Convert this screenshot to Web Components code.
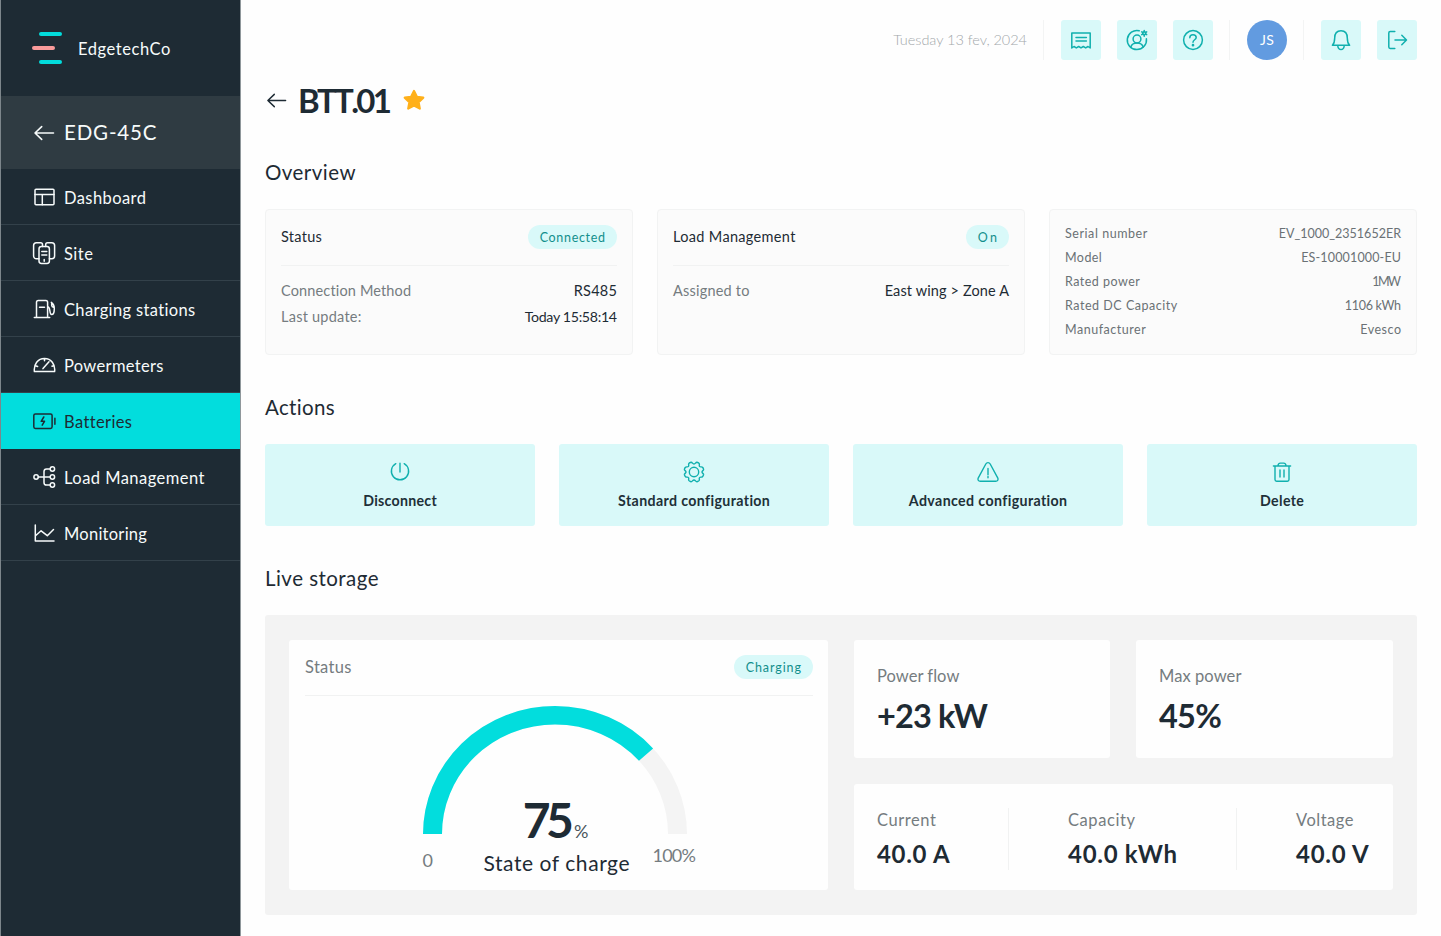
<!DOCTYPE html>
<html lang="en">
<head>
<meta charset="utf-8">
<title>EdgetechCo</title>
<style>
body{margin:0;background:#fefefe;font-family:Lato,"Open Sans",sans-serif;color:#1e2b34}
</style>
</head>
<body>
<app-shell></app-shell>
<script>
const ICONS={
back:'<path d="M3 12h18.500M9.700 5.600 3 12l6.700 6.400"/>',
dashboard:'<rect x="3" y="4.200" width="19" height="15.600" rx="1"/><path d="M3 9.400h19M10.300 9.400v10.400"/>',
site:'<path d="M7 17.700H4.400c-1.600 0-2.800-1-2.800-2.600V4.500c0-1.600 1.200-2.800 2.800-2.800h4.300c1 0 1.800.8 1.800 1.800v2M17.400 17.700h2.400c1.600 0 2.800-1 2.800-2.600V4.500c0-1.600-1.200-2.800-2.800-2.800h-4.300c-1 0-1.800.8-1.800 1.800v2"/><rect x="7" y="5.600" width="10.400" height="16.800" rx="2.400"/><path d="M9.800 10.600h5M9.800 14h5M12.200 18.600v1.600"/>',
station:'<path d="M4.500 20.500V5.300c0-1 .7-1.800 1.800-1.800h7.600c1 0 1.700.8 1.700 1.800v15.200M2.300 20.500h15.400M7.500 10.200h5M15.600 9.600c3.400.3 1.300 8 4 8 2.400 0 2.700-3 2.700-6.200 0-2.900-1.400-5-3-6M19.700 6v2.400c0 1 .8 1.600 2.400 2"/>',
meter:'<path d="M2.400 18.600C1.500 11 6 5.500 12.500 5.500s11 5.500 10.100 13.100zM11 15.600 17 8.800M12.500 5.500v2.200M3.600 12.700l2 .8M21.300 12.700l-1.300.6"/>',
battery:'<rect x="1.800" y="4.900" width="18.300" height="14.500" rx="1.600"/><path d="M22.900 9.300v6M11.800 8 9.200 12.300h3.300L10.200 16.200"/>',
load:'<circle cx="4.100" cy="12" r="2.200"/><circle cx="20.400" cy="4" r="2.200"/><circle cx="20.400" cy="12" r="2.200"/><circle cx="20.400" cy="20" r="2.200"/><path d="M6.300 12h11.900M18.200 4h-3.600c-1.700 0-2.600.9-2.600 2.600v10.800c0 1.700.9 2.600 2.600 2.600h3.600"/>',
chart:'<path d="M3.300 4v16H22M3.500 14.800 9.100 9.800l6.200 4.900 6.200-6.200"/>',
receipt:'<path d="M2.800 20V4.900h18.400V20l-2.200-1.500-2.300 1.400-2.400-1.400L12 19.900l-2.300-1.400-2.400 1.400L5 18.500zM7 9.500h10.400M7 13h10.400"/>',
account:'<path d="M14.200 2.700a9.600 9.600 0 1 0 7.200 8.100"/><circle cx="12" cy="11" r="3.900"/><path d="M5.800 19c.8-2.600 3-4 6.200-4s5.400 1.400 6.200 4"/><circle cx="19.200" cy="5.300" r="1.500"/><path d="M19.200 2.400v1.400M19.200 6.800v1.400M16.700 3.900l1.200.7M20.500 6l1.200.7M16.700 6.700l1.200-.7M20.500 4.600l1.200-.7"/>',
help:'<circle cx="12" cy="12" r="9.400"/><path d="M8.800 9.700c0-2 1.300-3 3.200-3s3.200 1.100 3.200 2.800c0 2.200-3.200 2.300-3.200 4.700"/><circle cx="12" cy="17.200" r=".6" fill="currentColor"/>',
bell:'<path d="M3.400 17.300c1.600-1.600 2.300-3.800 2.300-7.300 0-4.300 2.300-7.300 6.300-7.300s6.300 3 6.300 7.300c0 3.500.7 5.700 2.300 7.300zM8.700 17.500c.3 2.700 1.500 4 3.300 4s3-1.300 3.300-4"/>',
logout:'<path d="M9.800 3.600H5.200c-1 0-1.400.5-1.400 1.400v14c0 .9.400 1.400 1.400 1.400h4.600M10 12h11.300M16.800 7.300l4.700 4.700-4.700 4.700"/>',
power:'<path d="M7.800 3.700a8.600 8.600 0 1 0 8.400 0M12 3.200v8.900"/>',
gear:'<path d="M12 4c1.500 0 1.600-1.900 3-1.700 1.200.3 2 .7 2.300 1.400.4 1-.5 1.900.2 2.700.7.900 2 .1 2.800.7.700.5 1.100 1.200 1.300 2.200.2 1.200-1.600 1.400-1.600 2.700s1.800 1.500 1.600 2.700c-.2 1-.6 1.700-1.300 2.200-.8.600-2.100-.2-2.800.7-.7.800.2 1.700-.2 2.700-.3.700-1.100 1.100-2.300 1.400-1.400.2-1.500-1.700-3-1.700s-1.600 1.900-3 1.700c-1.200-.3-2-.7-2.300-1.400-.4-1 .5-1.900-.2-2.700-.7-.9-2-.1-2.800-.7-.7-.5-1.100-1.200-1.300-2.200C2.200 13.500 4 13.300 4 12s-1.800-1.500-1.600-2.700c.2-1 .6-1.700 1.300-2.200.8-.6 2.100.2 2.800-.7.700-.8-.2-1.700.2-2.700C7 3 7.800 2.600 9 2.300 10.400 2.100 10.500 4 12 4z"/><circle cx="12" cy="12" r="4.700"/>',
warn:'<path d="M9.800 4c1-1.900 3.400-1.900 4.400 0l7.500 13.800c.9 1.800 0 3.500-2 3.500H4.300c-2 0-2.900-1.700-2-3.500z"/><path d="M12 8.500v6.200M12 16.500v1.200"/>',
trash:'<path d="M3.400 6h17.200M5 6v13.600c0 1 .6 1.600 1.600 1.600h10.800c1 0 1.600-.6 1.600-1.600V6M8 6c0-2 .8-2.900 2.400-2.900h3.200C15.200 3.100 16 4 16 6M10 10v7M14 10v7"/>',
star:'<path fill="currentColor" stroke-width="2.200" d="M12 2.900l2.900 5.900 6.400.9-4.700 4.500 1.200 6.400L12 17.500l-5.800 3.100 1.200-6.400L2.700 9.700l6.400-.9z"/>'
};

function define(name,html,after){
  const tpl=document.createElement('template');
  customElements.define(name,class extends HTMLElement{
    connectedCallback(){
      if(this.shadowRoot)return;
      tpl.innerHTML=typeof html==='function'?html(this):html;
      this.attachShadow({mode:'open'}).append(tpl.content.cloneNode(true));
      if(after)after(this);
    }
  });
}
const attr=(e,n,d='')=>e.getAttribute(n)??d;

define('app-shell',`<style>
:host{display:grid;grid-template-columns:241px 1fr;height:936px;overflow:hidden}
main{display:flex;flex-direction:column;padding:0 24px}
.overview{display:grid;grid-template-columns:repeat(3,1fr);gap:24px;height:146px}
.actions{display:grid;grid-template-columns:repeat(4,1fr);gap:24px;height:82px}
.title{display:flex;align-items:center;height:40px;gap:10px}
h1{margin:0;font-weight:inherit}
</style>
<side-bar></side-bar>
<main>
 <top-bar></top-bar>
 <div class="title"><app-icon name="back" size="23" stroke="1.500"></app-icon><h1><fit-text size="33" weight="700" w="93" lh="40" style="font-kerning:none">BTT.01</fit-text></h1><app-icon name="star" size="24" style="color:#ffb01a"></app-icon></div>
 <section-title style="margin:37px 0 22px"><fit-text size="20.500" w="90" lh="31">Overview</fit-text></section-title>
 <div class="overview">
  <info-card>
   <card-head><fit-text size="14.500" w="40.500" lh="24">Status</fit-text><pill-badge slot="end"><fit-text size="12.500" w="65" lh="25">Connected</fit-text></pill-badge></card-head>
   <data-row><fit-text size="14.500" w="130" lh="26">Connection Method</fit-text><fit-text slot="end" size="14.500" w="43" lh="26">RS485</fit-text></data-row>
   <data-row><fit-text size="14.500" w="80" lh="26">Last update:</fit-text><fit-text slot="end" size="14.200" w="92" lh="26">Today 15:58:14</fit-text></data-row>
  </info-card>
  <info-card>
   <card-head><fit-text size="14.500" w="122" lh="24">Load Management</fit-text><pill-badge slot="end"><fit-text size="12.500" w="19" lh="25">On</fit-text></pill-badge></card-head>
   <data-row><fit-text size="14.500" w="76" lh="26">Assigned to</fit-text><fit-text slot="end" size="14.500" w="124" lh="26">East wing &gt; Zone A</fit-text></data-row>
  </info-card>
  <info-card style="padding-top:12px">
   <data-row small><fit-text size="12.500" w="82" lh="24">Serial number</fit-text><fit-text slot="end" size="12.500" w="122" lh="24">EV_1000_2351652ER</fit-text></data-row>
   <data-row small><fit-text size="12.500" w="36.500" lh="24">Model</fit-text><fit-text slot="end" size="12.500" w="99.500" lh="24">ES-10001000-EU</fit-text></data-row>
   <data-row small><fit-text size="12.500" w="74.500" lh="24">Rated power</fit-text><fit-text slot="end" size="12.500" w="28.500" lh="24">1MW</fit-text></data-row>
   <data-row small><fit-text size="12.500" w="112" lh="24">Rated DC Capacity</fit-text><fit-text slot="end" size="12.500" w="56" lh="24">1106 kWh</fit-text></data-row>
   <data-row small><fit-text size="12.500" w="80.500" lh="24">Manufacturer</fit-text><fit-text slot="end" size="12.500" w="40.500" lh="24">Evesco</fit-text></data-row>
  </info-card>
 </div>
 <section-title style="margin:37px 0 22px"><fit-text size="20.500" w="69.500" lh="31">Actions</fit-text></section-title>
 <div class="actions">
  <action-tile icon="power"><fit-text size="14.200" weight="700" w="73" lh="20">Disconnect</fit-text></action-tile>
  <action-tile icon="gear"><fit-text size="14.200" weight="700" w="151.500" lh="20">Standard configuration</fit-text></action-tile>
  <action-tile icon="warn"><fit-text size="14.200" weight="700" w="158" lh="20">Advanced configuration</fit-text></action-tile>
  <action-tile icon="trash"><fit-text size="14.200" weight="700" w="43.500" lh="20">Delete</fit-text></action-tile>
 </div>
 <section-title style="margin:37px 0 22px"><fit-text size="20.500" w="113" lh="31">Live storage</fit-text></section-title>
 <live-storage></live-storage>
</main>`);

define('side-bar',`<style>
:host{display:flex;flex-direction:column;box-sizing:border-box;background:#1e2b34;color:#f7fbfb;border-left:1px solid #7d868b;border-right:1px solid #8f979b}
.logo{display:flex;align-items:center;height:96px;padding-left:31px;gap:16px}
.logo fit-text{padding-top:2px}
.bars{display:flex;flex-direction:column;gap:10px;width:30px}
.bars i{width:23px;height:4px;border-radius:2px;background:#02dcdc;align-self:flex-end}
.bars i:nth-child(2){background:#f99b9b;align-self:flex-start}
.site{display:flex;align-items:center;height:73px;padding-left:31px;gap:8px;background:#2f3b42}
</style>
<div class="logo"><div class="bars"><i></i><i></i><i></i></div><fit-text size="16.500" w="92" lh="24">EdgetechCo</fit-text></div>
<div class="site"><app-icon name="back" stroke="1.600"></app-icon><fit-text size="20.500" w="92" lh="30" style="padding-bottom:1px">EDG-45C</fit-text></div>
<nav-item icon="dashboard"><fit-text size="16.500" w="81.500" lh="24">Dashboard</fit-text></nav-item>
<nav-item icon="site"><fit-text size="16.500" w="28.500" lh="24">Site</fit-text></nav-item>
<nav-item icon="station"><fit-text size="16.500" w="131" lh="24">Charging stations</fit-text></nav-item>
<nav-item icon="meter"><fit-text size="16.500" w="99" lh="24">Powermeters</fit-text></nav-item>
<nav-item icon="battery" active><fit-text size="16.500" w="67" lh="24">Batteries</fit-text></nav-item>
<nav-item icon="load"><fit-text size="16.500" w="140" lh="24">Load Management</fit-text></nav-item>
<nav-item icon="chart"><fit-text size="16.500" w="82.500" lh="24">Monitoring</fit-text></nav-item>`);

define('nav-item',e=>`<style>
:host{display:flex;align-items:center;gap:8px;height:55px;padding-left:31px;border-bottom:1px solid #33414a}
:host([active]){background:#02dddd;color:#1e2b34;border-color:#02dddd}
slot{display:block;padding-top:2px}
</style><app-icon name="${attr(e,'icon')}" stroke="1.500"></app-icon><slot></slot>`);

define('top-bar',`<style>
:host{display:flex;height:40px;padding:20px 0;justify-content:flex-end;align-items:center}
i{width:1px;height:40px;background:#f3f4f4}
.date{color:#a3a8ab;margin-right:16px}
.g{display:flex;gap:16px;margin:0 16px 0 17px}
.g:last-child{margin-right:0}
.av{width:40px;height:40px;border-radius:50%;background:#629be0;color:#fff;display:flex;align-items:center;justify-content:center;margin:0 16px 0 17px}
</style>
<div class="date"><fit-text size="14.500" weight="300" w="133.500" lh="24">Tuesday 13 fev, 2024</fit-text></div><i></i>
<div class="g"><icon-button icon="receipt"></icon-button><icon-button icon="account"></icon-button><icon-button icon="help"></icon-button></div><i></i>
<div class="av"><fit-text size="14" w="13.500" lh="20">JS</fit-text></div><i></i>
<div class="g"><icon-button icon="bell"></icon-button><icon-button icon="logout"></icon-button></div>`);

define('icon-button',e=>`<style>
:host{display:flex;width:40px;height:40px;border-radius:3px;background:#d9f9f9;color:#10b0ae;align-items:center;justify-content:center}
</style><app-icon name="${attr(e,'icon')}" stroke="1.500"></app-icon>`);

define('section-title',`<style>:host{display:block;height:30px}</style><slot></slot>`);

define('info-card',`<style>
:host{display:block;box-sizing:border-box;background:#fbfbfb;border:1px solid #f2f3f3;border-radius:4px;padding:11px 15px}
</style><slot></slot>`);

define('card-head',`<style>
:host{display:flex;justify-content:space-between;align-items:center;height:24px;padding:4px 0 16px;border-bottom:1px solid #f1f2f2;margin-bottom:12px}
</style><slot></slot><slot name="end"></slot>`);

define('data-row',`<style>
:host{display:flex;justify-content:space-between;color:#757c80}
:host([small]){color:#6a7175}
.v{color:#1e2b34}
:host([small]) .v{color:#6a7175}
</style><slot></slot><div class="v"><slot name="end"></slot></div>`);

define('pill-badge',`<style>
:host{display:block;height:24px;padding:0 12px 0 11.500px;border-radius:12px;background:#d9f9f9;color:#128f8c}
</style><slot></slot>`);

define('action-tile',e=>`<style>
:host{display:flex;flex-direction:column;align-items:center;box-sizing:border-box;padding-top:16px;gap:7px;border-radius:3px;background:#d9f9f9;color:#1e3038}
app-icon{color:#10b0ae}
</style><app-icon name="${attr(e,'icon')}" stroke="1.400"></app-icon><slot></slot>`);

define('live-storage',`<style>
:host{display:grid;grid-template-columns:539px 539px;gap:26px;box-sizing:border-box;height:300px;padding:25px 24px;background:#f3f3f3;border-radius:3px}
.card{background:#fefefe;border-radius:3px;box-sizing:border-box}
.left{padding:11px 15px 0 16px}
.left card-head{color:#757c80;margin-bottom:10px}
.right{display:grid;grid-template:118px 106px/256px 257px;gap:26px}
.stat{padding:24px 23px}
.wide{grid-column:1/-1;display:flex;padding:24px 23px;height:106px}
.wide i{width:1px;height:62px;background:#f1f2f2;margin-right:59px}
.a{width:131px}.b{width:168px}
</style>
<div class="card left">
 <card-head><fit-text size="16.500" w="46" lh="24">Status</fit-text><pill-badge slot="end"><fit-text size="12.500" w="55" lh="25">Charging</fit-text></pill-badge></card-head>
 <charge-gauge></charge-gauge>
</div>
<div class="right">
 <div class="card stat"><stat-block><fit-text size="16.500" w="82" lh="24">Power flow</fit-text><fit-text slot="value" size="32.500" weight="700" w="110" lh="41">+23 kW</fit-text></stat-block></div>
 <div class="card stat"><stat-block><fit-text size="16.500" w="82" lh="24">Max power</fit-text><fit-text slot="value" size="32.500" weight="700" w="62" lh="41">45%</fit-text></stat-block></div>
 <div class="card wide">
  <stat-block class="a"><fit-text size="16.500" w="58.500" lh="24">Current</fit-text><fit-text slot="value" size="24" weight="700" w="72" lh="30">40.0 A</fit-text></stat-block><i></i>
  <stat-block class="b"><fit-text size="16.500" w="66.500" lh="24">Capacity</fit-text><fit-text slot="value" size="24" weight="700" w="108.500" lh="30">40.0 kWh</fit-text></stat-block><i></i>
  <stat-block><fit-text size="16.500" w="57" lh="24">Voltage</fit-text><fit-text slot="value" size="24" weight="700" w="72" lh="30">40.0 V</fit-text></stat-block>
 </div>
</div>`);

define('stat-block',`<style>
:host{display:flex;flex-direction:column;gap:7px}
.l{color:#757c80}
</style><div class="l"><slot></slot></div><slot name="value"></slot>`);

/* The labels lie over the dial, so they share one grid cell with it. */
define('charge-gauge',`<style>
:host{display:grid;justify-content:center;grid-template-columns:290px;margin-left:-7px}
svg,.labels{grid-area:1/1}
svg{width:264px;height:128px;margin-left:12px}
.labels{padding-top:88px}
.value{display:flex;justify-content:center;align-items:flex-start;height:52px}
.foot{display:grid;grid-template-columns:60px 1fr 60px;align-items:start}
.foot div{color:#757c80}
</style>
<svg viewBox="0 0 264 132" preserveAspectRatio="none" fill="none" stroke-width="19"><path stroke="#f4f4f4" d="M9.500 132a122.500 122.500 0 0 1 245 0"/><path stroke="#02dddd" pathLength="180" stroke-dasharray="138 200" d="M9.500 132a122.500 122.500 0 0 1 245 0"/></svg>
<div class="labels">
 <div class="value"><fit-text size="48" weight="700" w="50" lh="52">75</fit-text><fit-text size="18" w="14" lh="20" style="color:#4b555b;padding-top:27px">%</fit-text></div>
 <div class="foot"><div style="padding:3px 0 0 12px"><fit-text size="18" w="9" lh="22">0</fit-text></div><fit-text size="21" w="145.500" lh="30" style="margin:2px 0 0 13px">State of charge</fit-text><div style="height:22px;margin-top:-2px;padding-left:12px"><fit-text size="18" w="43" lh="22">100%</fit-text></div></div>
</div>`);

define('app-icon',e=>`<style>
:host{display:block;flex:none;line-height:0}
svg{display:block;fill:none;stroke:currentColor;stroke-linecap:round;stroke-linejoin:round}
</style><svg width="${attr(e,'size','24')}" height="${attr(e,'size','24')}" viewBox="0 0 24 24" stroke-width="${attr(e,'stroke','1.4')}">${ICONS[attr(e,'name')]}</svg>`);

/* Single line of text tracked out to a given width (w). Registered last, once every parent is laid out. */
define('fit-text',e=>`<style>
:host{display:block;flex:none;white-space:nowrap;width:max-content}
span{display:inline-block;font-size:${attr(e,'size','16')}px;font-weight:${attr(e,'weight','400')};line-height:${attr(e,'lh','24')}px;vertical-align:top}
</style><span><slot></slot></span>`,e=>{
  const s=e.shadowRoot.querySelector('span'),n=e.textContent.length;
  const target=+attr(e,'w')+.025*attr(e,'size');
  const ls=(target-s.getBoundingClientRect().width)/Math.max(1,n-1);
  if(n>1){s.style.letterSpacing=ls.toFixed(3)+'px';s.style.marginRight=(-ls).toFixed(3)+'px';}
});
</script>
</body>
</html>
